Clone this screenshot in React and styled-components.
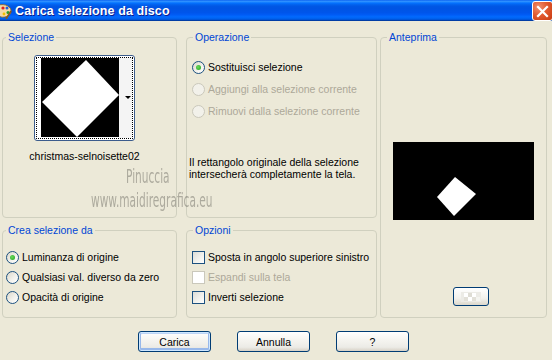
import React from 'react';
import styled, { createGlobalStyle, css } from 'styled-components';

const GlobalStyle = createGlobalStyle`
    html, body {
        margin: 0;
        padding: 0;
        background: #ECE9D8;
    }
    * {
        box-sizing: border-box;
    }
`

const font = css`
    font-family: "Liberation Sans", Arial, sans-serif;
    font-size: 10.5px;
    color: #000;
`

const App = () => {
    return (
        <Window>
            <GlobalStyle />
            <TitleBar>
                <AppIcon />
                <Title>Carica selezione da disco</Title>
                <CloseButton>
                    <svg width="13" height="13" viewBox="0 0 13 13">
                        <path d="M2 2 L11 11 M11 2 L2 11" stroke="#fff" strokeWidth="2.2" strokeLinecap="square" />
                    </svg>
                </CloseButton>
            </TitleBar>
            <Body>
                <Groups>
                    <Group $area="sel">
                        <Legend $offset={3}>Selezione</Legend>
                        <SelectionContent>
                            <Combo>
                                <FocusRect>
                                    <Thumb>
                                        <svg width="78" height="79" viewBox="0 0 78 79">
                                            <polygon points="45,2 78,37 36,79 1,44" fill="#fff" />
                                        </svg>
                                    </Thumb>
                                    <ComboStrip><Arrow /></ComboStrip>
                                </FocusRect>
                            </Combo>
                            <FileName>christmas-selnoisette02</FileName>
                        </SelectionContent>
                    </Group>

                    <Group $area="op">
                        <Legend $offset={6}>Operazione</Legend>
                        <OptionList $top={15} $gap={6} $pad={5}>
                            <Option><Radio $checked /><span>Sostituisci selezione</span></Option>
                            <Option $disabled><Radio $disabled /><span>Aggiungi alla selezione corrente</span></Option>
                            <Option $disabled><Radio $disabled /><span>Rimuovi dalla selezione corrente</span></Option>
                        </OptionList>
                        <Note>
                            Il rettangolo originale della selezione<br />
                            intersecherà completamente la tela.
                        </Note>
                    </Group>

                    <Group $area="prev">
                        <Legend $offset={6}>Anteprima</Legend>
                        <PreviewContent>
                            <Preview>
                                <svg width="141" height="78" viewBox="0 0 141 78">
                                    <polygon points="62,35 83,52 61,74 44,55" fill="#fff" />
                                </svg>
                            </Preview>
                            <SmallButton>
                                <svg width="20" height="10" viewBox="0 0 20 10">
                                    <rect x="0" y="0" width="20" height="10" fill="#ECEBE6" />
                                    <rect x="3" y="1" width="4" height="4" fill="#fff" />
                                    <rect x="11" y="1" width="4" height="4" fill="#fff" />
                                    <rect x="7" y="5" width="4" height="4" fill="#fff" />
                                    <rect x="15" y="5" width="4" height="4" fill="#f4f4f0" />
                                    <rect x="7" y="1" width="4" height="4" fill="#DEDCD4" />
                                    <rect x="3" y="5" width="4" height="4" fill="#E2E0D8" />
                                    <rect x="11" y="5" width="4" height="4" fill="#E2E0D8" />
                                </svg>
                            </SmallButton>
                        </PreviewContent>
                    </Group>

                    <Group $area="crea">
                        <Legend $offset={3}>Crea selezione da</Legend>
                        <OptionList $top={12} $gap={4} $pad={3}>
                            <Option><Radio $checked /><span>Luminanza di origine</span></Option>
                            <Option><Radio /><span>Qualsiasi val. diverso da zero</span></Option>
                            <Option><Radio /><span>Opacità di origine</span></Option>
                        </OptionList>
                    </Group>

                    <Group $area="opt">
                        <Legend $offset={6}>Opzioni</Legend>
                        <OptionList $top={12} $gap={4} $pad={5}>
                            <Option><Check /><span>Sposta in angolo superiore sinistro</span></Option>
                            <Option $disabled><Check $disabled /><span>Espandi sulla tela</span></Option>
                            <Option><Check /><span>Inverti selezione</span></Option>
                        </OptionList>
                    </Group>
                </Groups>

                <Buttons>
                    <Button $default>Carica</Button>
                    <Button>Annulla</Button>
                    <Button>?</Button>
                </Buttons>

                <Watermark>
                    <WatermarkLine $indent={35}>Pinuccia</WatermarkLine>
                    <WatermarkLine>www.maidiregrafica.eu</WatermarkLine>
                </Watermark>
            </Body>
        </Window>
    );
};

export default App;

const AppIcon = () => (
    <IconBox>
        <svg width="12" height="16" viewBox="0 0 12 16">
            <path d="M-4 3 C2 0 10 2 11 7 C12 12 6 15 1 14 C-2 13 -4 9 -4 3 Z" fill="#F3D9A6" stroke="#7A5A2A" strokeWidth="0.8" />
            <circle cx="3" cy="5" r="1.6" fill="#E02020" />
            <circle cx="7" cy="5" r="1.5" fill="#2060E0" />
            <circle cx="8" cy="9.5" r="1.5" fill="#20A030" />
            <circle cx="4" cy="11" r="1.4" fill="#F0C000" />
            <path d="M6 16 L11 8" stroke="#8A5A20" strokeWidth="1.6" />
        </svg>
    </IconBox>
)

const Window = styled.div`
    width: 552px;
    height: 360px;
    display: flex;
    flex-direction: column;
    background: #ECE9D8;
    overflow: hidden;
    ${font};
`

const TitleBar = styled.div`
    height: 21px;
    flex-shrink: 0;
    display: flex;
    align-items: center;
    background: linear-gradient(to bottom, #0058EE 0%, #3593FF 5%, #288EFF 8%, #127DFF 12%, #036FFC 16%, #0262EE 22%, #0057E5 30%, #0054E3 40%, #0055EB 60%, #005BF5 70%, #026AFE 80%, #0062EF 88%, #0052D6 94%, #0040AB 97%, #003092 100%);
`

const IconBox = styled.div`
    width: 12px;
    height: 16px;
    margin-top: 1px;
`

const Title = styled.div`
    flex: 1;
    margin-left: 3px;
    font-family: "Liberation Sans", Arial, sans-serif;
    font-weight: 700;
    font-size: 12.5px;
    color: #fff;
    text-shadow: 1px 1px 0 #0A1E8C;
    letter-spacing: 0.1px;
`

const CloseButton = styled.div`
    width: 21px;
    height: 20px;
    margin-right: -1px;
    margin-top: 1px;
    display: flex;
    align-items: center;
    justify-content: center;
    border: 1px solid #fff;
    border-radius: 3px;
    background: radial-gradient(circle at 30% 30%, #F09070 0%, #E25A30 45%, #C83A10 100%);
`

const Body = styled.div`
    position: relative;
    flex: 1;
    padding: 10px 0 0 2px;
`

const Groups = styled.div`
    display: grid;
    grid-template-columns: 175px 9px 191px 3px 167px;
    grid-template-rows: 187px 94px;
    row-gap: 6px;
    grid-template-areas:
        "sel . op . prev"
        "crea . opt . prev";
`

const Group = styled.fieldset`
    grid-area: ${props => props.$area};
    margin: 0;
    padding: 0;
    min-width: 0;
    border: 1px solid #D0D0BF;
    border-radius: 4px;
    display: flex;
    flex-direction: column;
`

const Legend = styled.legend`
    margin-left: ${props => props.$offset}px;
    padding: 0 2px;
    line-height: 13px;
    font-family: "Liberation Sans", Arial, sans-serif;
    font-size: 10.5px;
    color: #0046D5;
`

const SelectionContent = styled.div`
    display: flex;
    flex-direction: column;
    align-items: center;
    padding: 11px 10px 0 0;
`

const Combo = styled.div`
    width: 101px;
    height: 86px;
    display: flex;
    padding: 1px;
    background: #fff;
    border: 1px solid #3C5C8C;
    border-radius: 3px;
`

const FocusRect = styled.div`
    flex: 1;
    display: flex;
    padding: 0 0 0 4px;
    border: 1px dotted #000;
`

const Thumb = styled.div`
    width: 78px;
    height: 79px;
    margin-top: 0;
    background: #000;
    display: flex;
`

const ComboStrip = styled.div`
    flex: 1;
    display: flex;
    align-items: center;
    justify-content: flex-end;
    padding-right: 1px;
    padding-bottom: 2px;
    background: #F4F4F4;
`

const Arrow = styled.div`
    width: 0;
    height: 0;
    border-left: 3px solid transparent;
    border-right: 3px solid transparent;
    border-top: 3px solid #000;
`

const FileName = styled.div`
    margin-top: 9px;
    line-height: 13px;
`

const OptionList = styled.div`
    display: flex;
    flex-direction: column;
    gap: ${props => props.$gap}px;
    margin-top: ${props => props.$top}px;
    padding-left: ${props => props.$pad}px;
`

const Option = styled.div`
    display: flex;
    align-items: center;
    height: 16px;
    gap: 3px;
    white-space: nowrap;
    color: ${props => props.$disabled ? '#ACA899' : '#000'};
`

const Radio = styled.div`
    position: relative;
    width: 13px;
    height: 13px;
    flex-shrink: 0;
    border-radius: 50%;
    border: 1px solid ${props => props.$disabled ? '#CAC8BB' : '#1C5180'};
    background: ${props => props.$disabled ? '#F2F1EA' : 'linear-gradient(135deg, #DCD8CA 0%, #F4F3EE 60%, #fff 100%)'};
    ${props => props.$checked && css`
        &::after {
            content: "";
            position: absolute;
            left: 3px;
            top: 3px;
            width: 5px;
            height: 5px;
            border-radius: 50%;
            background: radial-gradient(circle at 40% 40%, #6ADA5A, #21A121);
        }
    `}
`

const Check = styled.div`
    width: 13px;
    height: 13px;
    flex-shrink: 0;
    border: 1px solid ${props => props.$disabled ? '#CAC8BB' : '#1C5180'};
    background: ${props => props.$disabled ? '#fff' : 'linear-gradient(135deg, #DCDCD7 0%, #F2F2EE 60%, #fff 100%)'};
`

const Note = styled.div`
    margin-top: 37px;
    padding-left: 2px;
    line-height: 12px;
`

const PreviewContent = styled.div`
    display: flex;
    flex-direction: column;
    align-items: center;
    padding-top: 98px;
`

const Preview = styled.div`
    width: 141px;
    height: 78px;
    background: #000;
    display: flex;
`

const SmallButton = styled.div`
    align-self: flex-start;
    margin: 67px 0 0 72px;
    width: 36px;
    height: 19px;
    display: flex;
    align-items: center;
    justify-content: center;
    border: 1px solid #003C74;
    border-radius: 3px;
    background: linear-gradient(to bottom, #fff 0%, #F2F1EC 60%, #DCD8CC 100%);
    svg {
        filter: blur(0.5px);
    }
`

const Buttons = styled.div`
    display: flex;
    gap: 26px;
    margin-top: 13px;
    padding-left: 136px;
`

const Button = styled.div`
    width: 73px;
    height: 21px;
    display: flex;
    align-items: center;
    justify-content: center;
    border: 1px solid #003C74;
    border-radius: 3px;
    background: linear-gradient(to bottom, #FFFFFF 0%, #F6F5F1 40%, #ECEBE6 80%, #D6D0C5 100%);
    ${props => props.$default && css`
        box-shadow: inset 0 0 0 1px #CEE7FF, inset 0 -1px 0 2px #98B8EA, inset 1px 1px 0 1px #BCD4F6;
    `}
`

const Watermark = styled.div`
    position: absolute;
    left: 91px;
    top: 143px;
    display: flex;
    flex-direction: column;
    pointer-events: none;
`

const WatermarkLine = styled.div`
    margin-left: ${props => props.$indent || 0}px;
    font-family: "DejaVu Sans Condensed", "Liberation Sans Narrow", sans-serif;
    font-size: 19px;
    line-height: 24px;
    color: rgba(120, 118, 110, 0.55);
    transform: scaleX(0.62);
    transform-origin: left center;
    white-space: nowrap;
`
